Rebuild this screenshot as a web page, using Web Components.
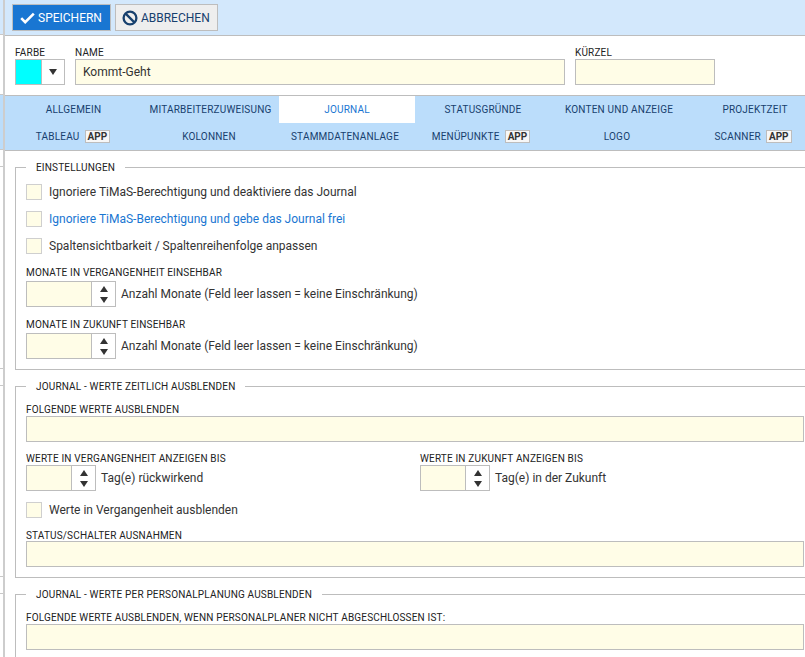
<!DOCTYPE html>
<html lang="de">
<head>
<meta charset="utf-8">
<title>Kommt-Geht</title>
<style>
html, body { margin: 0; height: 100%; overflow: hidden; background: #fff; }
body { font-family: Roboto, "Liberation Sans", sans-serif; color: #333; }
</style>
</head>
<body>

<edit-page>
  <tool-bar slot="toolbar">
    <tool-button kind="primary" icon="check">SPEICHERN</tool-button>
    <tool-button icon="ban">ABBRECHEN</tool-button>
  </tool-bar>

  <head-form slot="head"></head-form>

  <tab-bar slot="tabs">
    <tab-row cols="137px 137px 136px 136px 136px 136px">
      <tab-item>ALLGEMEIN</tab-item>
      <tab-item>MITARBEITERZUWEISUNG</tab-item>
      <tab-item active>JOURNAL</tab-item>
      <tab-item>STATUSGRÜNDE</tab-item>
      <tab-item>KONTEN UND ANZEIGE</tab-item>
      <tab-item>PROJEKTZEIT</tab-item>
    </tab-row>
    <tab-row cols="repeat(6, 136px)">
      <tab-item app>TABLEAU</tab-item>
      <tab-item>KOLONNEN</tab-item>
      <tab-item>STAMMDATENANLAGE</tab-item>
      <tab-item app>MENÜPUNKTE</tab-item>
      <tab-item>LOGO</tab-item>
      <tab-item app>SCANNER</tab-item>
    </tab-row>
  </tab-bar>

  <form-group legend="EINSTELLUNGEN">
    <check-row>Ignoriere TiMaS-Berechtigung und deaktiviere das Journal</check-row>
    <check-row link>Ignoriere TiMaS-Berechtigung und gebe das Journal frei</check-row>
    <check-row>Spaltensichtbarkeit / Spaltenreihenfolge anpassen</check-row>
    <spin-field style="margin-top:7px" label="MONATE IN VERGANGENHEIT EINSEHBAR" width="64">Anzahl Monate (Feld leer lassen = keine Einschränkung)</spin-field>
    <spin-field style="margin-top:11px" label="MONATE IN ZUKUNFT EINSEHBAR" width="64">Anzahl Monate (Feld leer lassen = keine Einschränkung)</spin-field>
  </form-group>

  <form-group legend="JOURNAL - WERTE ZEITLICH AUSBLENDEN">
    <text-field label="FOLGENDE WERTE AUSBLENDEN"></text-field>
    <two-cols>
      <spin-field style="--label-gap:1px" label="WERTE IN VERGANGENHEIT ANZEIGEN BIS" width="44">Tag(e) rückwirkend</spin-field>
      <spin-field style="--label-gap:1px" label="WERTE IN ZUKUNFT ANZEIGEN BIS" width="44">Tag(e) in der Zukunft</spin-field>
    </two-cols>
    <check-row style="margin-top:5px">Werte in Vergangenheit ausblenden</check-row>
    <text-field style="--label-gap:0px" label="STATUS/SCHALTER AUSNAHMEN"></text-field>
  </form-group>

  <form-group legend="JOURNAL - WERTE PER PERSONALPLANUNG AUSBLENDEN">
    <text-field label="FOLGENDE WERTE AUSBLENDEN, WENN PERSONALPLANER NICHT ABGESCHLOSSEN IST:"></text-field>
  </form-group>
</edit-page>

<script>
// shared look of the small uppercase labels
const labelCss = `
  font-size: 10px;
  font-weight: 400;
  letter-spacing: .17px;
  line-height: 12px;
  color: #222;
`;
// field labels sit 1px lower in their 12px box
const fieldLabelCss = `
  display: block; box-sizing: border-box; height: 12px; padding-top: 1px;
  ${labelCss}
`;
const inputBg = "#fffde7";
const lineColor = "#bdbdbd";

function shadow(el, html) {
  el.attachShadow({ mode: "open" }).innerHTML = html;
}

class EditPage extends HTMLElement {
  constructor() {
    super();
    shadow(this, `
<style>
:host { display: flex; width: 815px; height: 657px; overflow: hidden; }
.side { width: 3px; flex: none; }
.side div { box-sizing: border-box; border-bottom: 1px solid #c8c8c8; }
.gap { width: 2px; flex: none; background: #cdcdcd; }
.main { flex: 1; min-width: 0; }
.body { padding: 0 0 0 10px; }
</style>
<div class="side">
  <div style="height:35px;background:#d3e8fc"></div>
  <div style="height:60px"></div>
  <div style="height:55px;background:#bbddfb"></div>
  <div style="height:17px"></div>
  <div style="height:202px"></div>
  <div style="height:17px"></div>
  <div style="height:191px"></div>
  <div style="height:17px"></div>
</div>
<div class="gap"></div>
<div class="main">
  <slot name="toolbar"></slot>
  <slot name="head"></slot>
  <slot name="tabs"></slot>
  <div class="body"><slot></slot></div>
</div>`);
  }
}

class ToolBar extends HTMLElement {
  constructor() {
    super();
    shadow(this, `
<style>
:host {
  display: flex; gap: 4px; box-sizing: border-box; height: 36px;
  padding: 4px 0 0 7px; background: #d3e8fc; border-bottom: 1px solid ${lineColor};
}
</style>
<slot></slot>`);
  }
}

const toolIcons = {
  check: `<svg width="15" height="12" viewBox="0 0 15 12"><path d="M1.2 6.2 5.2 10.2 13.8 1.6" fill="none" stroke="#fff" stroke-width="2.6"/></svg>`,
  ban: `<svg width="16" height="16" viewBox="0 0 16 16"><circle cx="8" cy="8" r="6.4" fill="none" stroke="#17406e" stroke-width="2.3"/><path d="M3.6 3.6 12.4 12.4" stroke="#17406e" stroke-width="2.3"/></svg>`
};

class ToolButton extends HTMLElement {
  constructor() {
    super();
    const primary = this.getAttribute("kind") === "primary";
    shadow(this, `
<style>
:host {
  display: inline-flex; align-items: center; gap: 3px; box-sizing: border-box; height: 27px;
  padding: 0 ${primary ? "8px" : "7px"} 0 ${primary ? "7px" : "6px"}; font-size: 12px; border: 1px solid ${lineColor};
  background: ${primary ? "#1976d2" : "#eeeeee"}; color: ${primary ? "#fff" : "#17406e"};
}
</style>
${toolIcons[this.getAttribute("icon")]}<slot></slot>`);
  }
}

class HeadForm extends HTMLElement {
  constructor() {
    super();
    shadow(this, `
<style>
:host { display: flex; box-sizing: border-box; height: 59px; padding: 10px 0 0 10px; }
label { ${fieldLabelCss} margin-bottom: 1px; }
.color { width: 50px; margin-right: 10px; }
.picker { display: flex; box-sizing: border-box; height: 26px; border: 1px solid ${lineColor}; }
.swatch { width: 25px; background: #00ffff; border-right: 1px solid ${lineColor}; }
.drop { flex: 1; display: flex; align-items: center; justify-content: center; }
.drop i { border: 4px solid transparent; border-top: 6px solid #333; border-bottom: 0; }
.box {
  box-sizing: border-box; height: 26px; border: 1px solid ${lineColor}; background: ${inputBg};
  padding: 0 7px; font-size: 12px; line-height: 24px;
}
.name { width: 490px; margin-right: 10px; }
.short { width: 140px; }
</style>
<div class="color"><label>FARBE</label><div class="picker"><div class="swatch"></div><div class="drop"><i></i></div></div></div>
<div class="name"><label>NAME</label><div class="box">Kommt-Geht</div></div>
<div class="short"><label>KÜRZEL</label><div class="box"></div></div>`);
  }
}

class TabBar extends HTMLElement {
  constructor() {
    super();
    shadow(this, `
<style>
:host {
  display: block; box-sizing: border-box; height: 56px;
  background: #bbddfb; border-top: 1px solid ${lineColor}; border-bottom: 1px solid ${lineColor};
}
</style>
<slot></slot>`);
  }
}

class TabRow extends HTMLElement {
  constructor() {
    super();
    shadow(this, `
<style>
:host { display: grid; grid-template-columns: ${this.getAttribute("cols")}; height: 27px; }
</style>
<slot></slot>`);
  }
}

class TabItem extends HTMLElement {
  constructor() {
    super();
    const active = this.hasAttribute("active");
    const app = this.hasAttribute("app");
    shadow(this, `
<style>
:host {
  display: flex; align-items: center; justify-content: center; gap: 5px;
  font-size: 10px; font-weight: 400; letter-spacing: .2px;
  color: ${active ? "#1976d2" : "#17406e"};
  ${active ? "background: #fff;" : ""}
}
.app {
  font-size: 10px; font-weight: 700; color: #333; background: #f7f7f7; letter-spacing: 0;
  border: 1px solid ${lineColor}; padding: 0 2px; line-height: 11px;
}
</style>
<slot></slot>${app ? `<span class="app">APP</span>` : ""}`);
  }
}

class FormGroup extends HTMLElement {
  constructor() {
    super();
    shadow(this, `
<style>
:host { display: block; margin-top: 10px; }
fieldset { margin: 0; padding: 4px 10px 10px; border: 1px solid ${lineColor}; }
legend { padding: 0 10px; ${labelCss} line-height: 13px; }
</style>
<fieldset><legend>${this.getAttribute("legend")}</legend><slot></slot></fieldset>`);
  }
}

class CheckRow extends HTMLElement {
  constructor() {
    super();
    const link = this.hasAttribute("link");
    shadow(this, `
<style>
:host {
  display: flex; align-items: center; gap: 7px; height: 27px; font-size: 12px;
  color: ${link ? "#1976d2" : "#333"};
}
i { box-sizing: border-box; width: 16px; height: 16px; background: ${inputBg}; border: 1px solid #cfcfcf; }
</style>
<i></i><slot></slot>`);
  }
}

class SpinField extends HTMLElement {
  constructor() {
    super();
    const w = this.getAttribute("width");
    shadow(this, `
<style>
:host { display: block; }
label { ${fieldLabelCss} margin-bottom: var(--label-gap, 3px); }
.row { display: flex; align-items: center; gap: 5px; font-size: 12px; }
.spin { display: flex; box-sizing: border-box; height: 26px; border: 1px solid ${lineColor}; }
.val { width: ${w}px; background: ${inputBg}; border-right: 1px solid ${lineColor}; }
.btn { width: 23px; display: flex; flex-direction: column; align-items: center; justify-content: center; gap: 5px; }
.up { border: 4px solid transparent; border-bottom: 6px solid #333; border-top: 0; }
.down { border: 4px solid transparent; border-top: 6px solid #333; border-bottom: 0; }
</style>
<label>${this.getAttribute("label")}</label>
<div class="row">
  <div class="spin"><div class="val"></div><div class="btn"><i class="up"></i><i class="down"></i></div></div>
  <span><slot></slot></span>
</div>`);
  }
}

class TextField extends HTMLElement {
  constructor() {
    super();
    shadow(this, `
<style>
:host { display: block; margin-top: 6px; }
label { ${fieldLabelCss} margin-bottom: var(--label-gap, 1px); }
div { box-sizing: border-box; height: 26px; border: 1px solid ${lineColor}; background: ${inputBg}; }
</style>
<label>${this.getAttribute("label")}</label><div></div>`);
  }
}

class TwoCols extends HTMLElement {
  constructor() {
    super();
    shadow(this, `
<style>
:host { display: grid; grid-template-columns: 394px 1fr; margin-top: 10px; }
</style>
<slot></slot>`);
  }
}

customElements.define("edit-page", EditPage);
customElements.define("tool-bar", ToolBar);
customElements.define("tool-button", ToolButton);
customElements.define("head-form", HeadForm);
customElements.define("tab-bar", TabBar);
customElements.define("tab-row", TabRow);
customElements.define("tab-item", TabItem);
customElements.define("form-group", FormGroup);
customElements.define("check-row", CheckRow);
customElements.define("spin-field", SpinField);
customElements.define("text-field", TextField);
customElements.define("two-cols", TwoCols);
</script>
</body>
</html>
